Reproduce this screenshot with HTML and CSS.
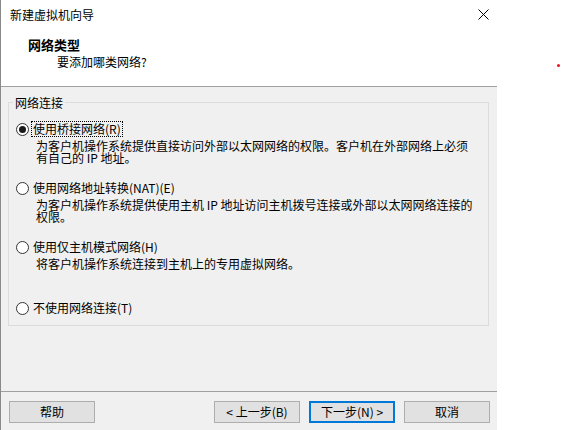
FILE: index.html
```html
<!DOCTYPE html>
<html lang="zh-CN">
<head>
<meta charset="utf-8">
<title>新建虚拟机向导</title>
<link rel="stylesheet" href="styles.css">
</head>
<body>
<div class="dialog">
  <div class="titlebar">
    <span class="title">新建虚拟机向导</span>
    <svg class="close" width="11" height="11" viewBox="0 0 11 11"><path d="M0.5 0.5 L10.5 10.5 M10.5 0.5 L0.5 10.5" stroke="#000" stroke-width="1" fill="none"/></svg>
  </div>
  <div class="header">
    <div class="h-title">网络类型</div>
    <div class="h-sub">要添加哪类网络?</div>
  </div>
  <div class="body">
    <div class="group">
      <div class="legend">网络连接</div>
      <div class="options">
        <div class="option">
          <div class="opt-row"><span class="radio checked"></span><span class="opt-label focus">使用桥接网络(R)</span></div>
          <div class="desc">为客户机操作系统提供直接访问外部以太网网络的权限。客户机在外部网络上必须有自己的 IP 地址。</div>
        </div>
        <div class="option">
          <div class="opt-row"><span class="radio"></span><span class="opt-label">使用网络地址转换(NAT)(E)</span></div>
          <div class="desc">为客户机操作系统提供使用主机 IP 地址访问主机拨号连接或外部以太网网络连接的权限。</div>
        </div>
        <div class="option">
          <div class="opt-row"><span class="radio"></span><span class="opt-label">使用仅主机模式网络(H)</span></div>
          <div class="desc">将客户机操作系统连接到主机上的专用虚拟网络。</div>
        </div>
        <div class="option last">
          <div class="opt-row"><span class="radio"></span><span class="opt-label">不使用网络连接(T)</span></div>
        </div>
      </div>
    </div>
  </div>
  <div class="footer">
    <button class="btn">帮助</button>
    <div class="nav">
      <button class="btn">&lt; 上一步(B)</button>
      <button class="btn default">下一步(N) &gt;</button>
      <button class="btn">取消</button>
    </div>
  </div>
</div>
<span class="dot"></span>
</body>
</html>
```
FILE: styles.css
```css
html, body {
  margin: 0;
  padding: 0;
  background: #ffffff;
}
body {
  width: 562px;
  height: 430px;
  position: relative;
  overflow: hidden;
  font-family: "Noto Sans CJK SC", "Microsoft YaHei", sans-serif;
  font-size: 12px;
  color: #000;
}
.dialog {
  box-sizing: border-box;
  width: 497px;
  height: 430px;
  border-left: 1px solid #8a8a8a;
  background: #f0f0f0;
  display: flex;
  flex-direction: column;
}
.titlebar {
  height: 30px;
  background: #fff;
  display: flex;
  align-items: center;
  justify-content: space-between;
  padding: 0 8px 0 9px;
}
.title {
  font-size: 12px;
  line-height: 30px;
}
.close {
  display: block;
  margin-top: -2px;
}
.header {
  box-sizing: border-box;
  height: 57px;
  background: #fff;
  border-bottom: 1px solid #a0a0a0;
  padding-top: 7px;
}
.h-title {
  font-size: 13px;
  font-weight: bold;
  line-height: 16px;
  margin-left: 27px;
}
.h-sub {
  line-height: 14px;
  margin: 2px 0 0 56px;
}
.body {
  height: 304px;
  box-sizing: border-box;
  padding-top: 15px;
}
.group {
  box-sizing: border-box;
  height: 224px;
  margin: 0 8px 0 7px;
  border: 1px solid #dcdcdc;
}
.legend {
  width: max-content;
  line-height: 14px;
  margin: -7px 0 0 4px;
  padding: 0 2px;
  background: #f0f0f0;
}
.options {
  display: flex;
  flex-direction: column;
  gap: 16px;
  padding: 11px 0 0 7px;
}
.option.last {
  margin-top: 2px;
}
.opt-row {
  display: flex;
  align-items: center;
  height: 16px;
}
.radio {
  box-sizing: border-box;
  width: 13px;
  height: 13px;
  border: 1px solid #333;
  border-radius: 50%;
  background: #fff;
  display: flex;
  align-items: center;
  justify-content: center;
  margin-right: 4px;
  flex: none;
}
.radio.checked::after {
  content: "";
  width: 7px;
  height: 7px;
  border-radius: 50%;
  background: #1a1a1a;
}
.opt-label {
  line-height: 14px;
  padding: 0 1px;
  margin-left: -1px;
}
.opt-label.focus {
  outline: 1px dotted #000;
}
.desc {
  width: 441px;
  height: 24px;
  line-height: 12px;
  margin: 3px 0 0 20px;
}
.footer {
  flex: 1;
  border-top: 1px solid #a0a0a0;
  display: flex;
  justify-content: space-between;
  align-items: flex-start;
  padding: 9px 7px 0 8px;
}
.nav {
  display: flex;
  gap: 9px;
}
.btn {
  box-sizing: border-box;
  width: 86px;
  height: 22px;
  padding: 0;
  border: 1px solid #adadad;
  background: #e1e1e1;
  font-family: "Noto Sans CJK SC", "Microsoft YaHei", sans-serif;
  font-size: 12px;
  color: #000;
  line-height: 18px;
}
.btn.default {
  border: 2px solid #0078d7;
}
.dot {
  position: absolute;
  left: 557px;
  top: 64px;
  width: 3px;
  height: 3px;
  border-radius: 50%;
  background: #e81123;
}
```
